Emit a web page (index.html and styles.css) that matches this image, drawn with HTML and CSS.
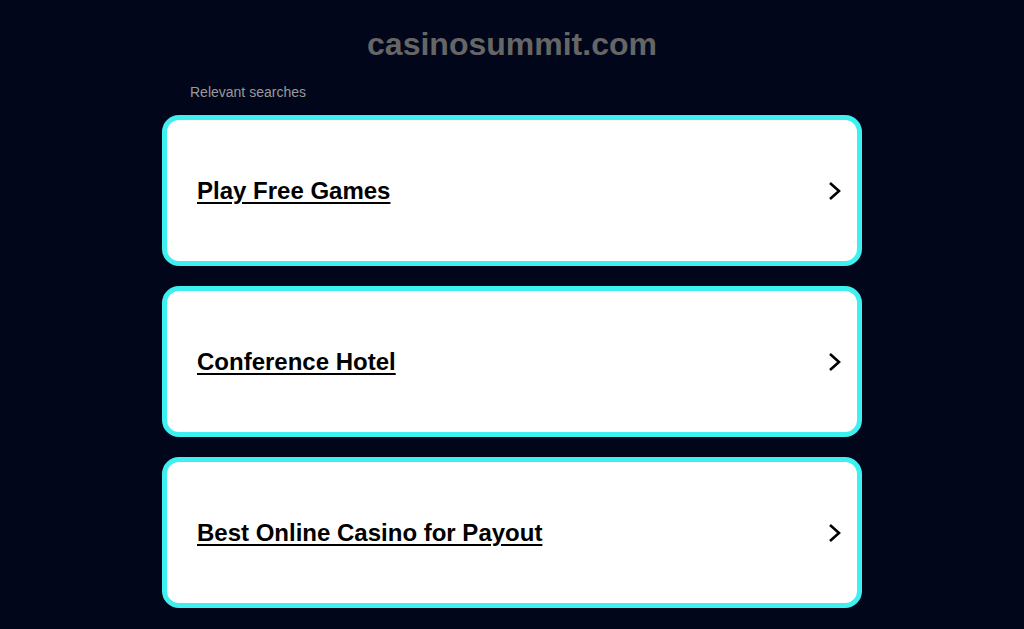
FILE: index.html
```html
<!DOCTYPE html>
<html>
<head>
<meta charset="utf-8">
<link rel="stylesheet" href="styles.css">
</head>
<body>
<div class="page">
  <h1 class="domain">casinosummit.com</h1>
  <div class="related">
    <p class="label">Relevant searches</p>
    <a class="card" href="#"><span class="title">Play Free Games</span>
      <svg class="chev" viewBox="0 0 16 20" width="16" height="20"><path d="M3 2 L12 10 L3 18" fill="none" stroke="#000" stroke-width="2.6"/></svg></a>
    <a class="card" href="#"><span class="title">Conference Hotel</span>
      <svg class="chev" viewBox="0 0 16 20" width="16" height="20"><path d="M3 2 L12 10 L3 18" fill="none" stroke="#000" stroke-width="2.6"/></svg></a>
    <a class="card" href="#"><span class="title">Best Online Casino for Payout</span>
      <svg class="chev" viewBox="0 0 16 20" width="16" height="20"><path d="M3 2 L12 10 L3 18" fill="none" stroke="#000" stroke-width="2.6"/></svg></a>
  </div>
</div>
</body>
</html>
```
FILE: styles.css
```css
html, body {
  margin: 0;
  padding: 0;
  background: #02061a;
  font-family: "Liberation Sans", Arial, sans-serif;
}
.page {
  padding-top: 26px;
}
.domain {
  margin: 0;
  text-align: center;
  font-size: 32px;
  line-height: 36px;
  font-weight: bold;
  color: #666666;
}
.related {
  width: 700px;
  margin: 0 auto;
}
.label {
  margin: 22px 0 15px 28px;
  font-size: 14px;
  line-height: 16px;
  color: #9a9a9a;
}
.card {
  display: flex;
  align-items: center;
  justify-content: space-between;
  box-sizing: border-box;
  height: 151px;
  margin-bottom: 20px;
  padding: 0 14px 0 30px;
  background: #ffffff;
  border: 5px solid #3ff0f0;
  border-radius: 17px;
  color: #000;
  text-decoration: none;
}
.title {
  font-size: 24px;
  font-weight: bold;
  text-decoration: underline;
  text-underline-offset: 3px;
  text-decoration-thickness: 2px;
}
.chev {
  display: block;
}
```
